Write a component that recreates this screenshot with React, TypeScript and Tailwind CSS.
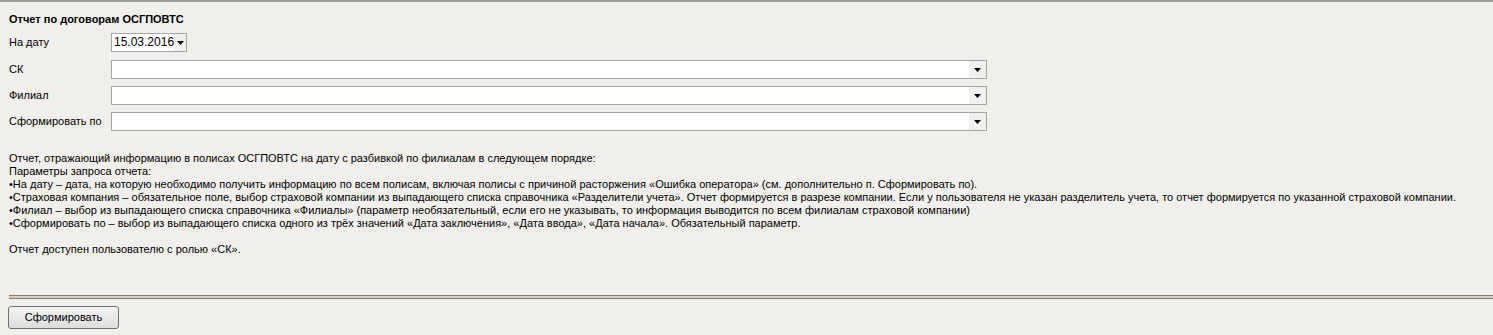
import React from "react";

function Arrow() {
  return (
    <svg width="7" height="4" viewBox="0 0 7 4" className="block">
      <polygon points="0,0 7,0 3.5,4" fill="#000" />
    </svg>
  );
}

function Row({ label, children }: { label: string; children: React.ReactNode }) {
  return (
    <div className="flex items-center h-[19px]">
      <div className="w-[102px] text-[11px] leading-[13px] text-black">{label}</div>
      {children}
    </div>
  );
}

function Dropdown() {
  return (
    <div className="w-[876px] h-[19px] bg-white border border-[#a5a5a5] flex justify-end">
      <div className="w-[17px] h-full bg-[#f0f0f0] flex items-center justify-center">
        <Arrow />
      </div>
    </div>
  );
}

export default function App() {
  const lines = [
    "Отчет, отражающий информацию в полисах ОСГПОВТС на дату с разбивкой по филиалам в следующем порядке:",
    "Параметры запроса отчета:",
    "•На дату – дата, на которую необходимо получить информацию по всем полисам, включая полисы с причиной расторжения «Ошибка оператора» (см. дополнительно п. Сформировать по).",
    "•Страховая компания – обязательное поле, выбор страховой компании из выпадающего списка справочника «Разделители учета». Отчет формируется в разрезе компании. Если у пользователя не указан разделитель учета, то отчет формируется по указанной страховой компании.",
    "•Филиал – выбор из выпадающего списка справочника «Филиалы» (параметр необязательный, если его не указывать, то информация выводится по всем филиалам страховой компании)",
    "•Сформировать по – выбор из выпадающего списка одного из трёх значений «Дата заключения», «Дата ввода», «Дата начала». Обязательный параметр.",
  ];
  return (
    <div
      className="w-[1493px] h-[335px] bg-[#f0efeb] border-t-2 border-[#a0a0a0] overflow-hidden text-black"
      style={{ fontFamily: '"Liberation Sans", Arial, sans-serif' }}
    >
      <div className="pl-[9px] pt-[11px]">
        <div className="text-[11px] leading-[13px] font-bold">Отчет по договорам ОСГПОВТС</div>
        <div className="mt-[7px] flex flex-col gap-[7px]">
          <div className="mb-[1px]">
            <Row label="На дату">
              <div className="w-[76px] h-[19px] bg-white border border-[#a5a5a5] flex items-center pl-[2px]">
                <span className="text-[12px] leading-[13px]">15.03.2016</span>
                <div className="ml-auto w-[17px] h-full bg-[#f0f0f0] flex items-center justify-center">
                  <Arrow />
                </div>
              </div>
            </Row>
          </div>
          <Row label="СК">
            <Dropdown />
          </Row>
          <Row label="Филиал">
            <Dropdown />
          </Row>
          <Row label="Сформировать по">
            <Dropdown />
          </Row>
        </div>
        <div className="mt-[21px] text-[11px] leading-[13px] whitespace-nowrap">
          {lines.map((l, i) => (
            <div key={i}>{l}</div>
          ))}
          <div className="mt-[13px]">Отчет доступен пользователю с ролью «СК».</div>
        </div>
      </div>
      <div className="ml-[9px] mt-[39px] h-[4px] border-y border-[#857d6d] bg-[#d8d2c4]" />
      <div className="pl-[8px] mt-[5px]">
        <button className="w-[111px] h-[23px] rounded-[3px] border border-[#707070] bg-gradient-to-b from-[#f4f4f4] to-[#dddddd] text-[11px] leading-[13px] text-black">
          Сформировать
        </button>
      </div>
    </div>
  );
}
